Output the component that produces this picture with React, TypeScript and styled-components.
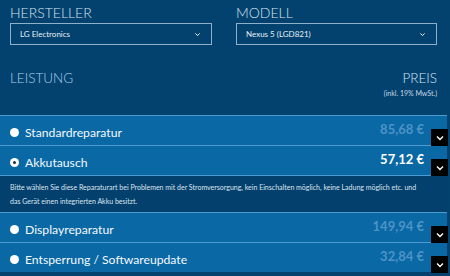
import React from "react";
import styled, { createGlobalStyle } from "styled-components";

const GlobalStyle = createGlobalStyle`
  body {
    margin: 0;
    background: #03426f;
    font-family: Lato, "Open Sans", sans-serif;
    overflow: hidden;
  }
`;

const Page = styled.div`
  width: 450px;
  height: 276px;
  overflow: hidden;
`;

const Pickers = styled.div`
  display: grid;
  grid-template-columns: 202px 201px;
  column-gap: 24px;
  padding: 3px 13px 0 10px;
`;

const Field = styled.div`
  display: flex;
  flex-direction: column;
`;

const Label = styled.div`
  color: #d3e3ef;
  font-size: 14px;
  font-weight: 300;
  line-height: 20px;
`;

const Select = styled.div`
  height: 20px;
  border: 1px solid #8fb0c8;
  display: flex;
  align-items: center;
  justify-content: space-between;
  padding: 0 10px 0 9px;
  color: #e6eef5;
  font-size: 8px;
`;

const Header = styled.div`
  display: flex;
  justify-content: space-between;
  padding: 25px 13px 0 10px;
  height: 70px;
  box-sizing: border-box;
`;

const HeadLabel = styled.div`
  color: #a9cfe9;
  font-size: 13.5px;
  font-weight: 300;
  line-height: 16px;
`;

const PriceHead = styled.div`
  display: flex;
  flex-direction: column;
  align-items: flex-end;
`;

const PriceLabel = styled(HeadLabel)`
  color: #d3e3ef;
`;

const Vat = styled.div`
  color: #c6d7e4;
  font-size: 7px;
  margin-top: 3px;
`;

const List = styled.div`
  margin-right: 3px;
`;

const Row = styled.div`
  position: relative;
  height: 29px;
  background: #0a69a5;
  border-top: 1px solid #4d9bd0;
  display: flex;
  align-items: center;
  justify-content: space-between;
  padding: 0 23px 0 10px;
`;

const Name = styled.div`
  display: flex;
  align-items: center;
  gap: 6px;
  color: #f4f8fb;
  font-size: 12.2px;
  padding-top: 3px;
`;

const Radio = styled.span<{ $checked?: boolean }>`
  width: 9px;
  height: 9px;
  border-radius: 50%;
  background: #ffffff;
  display: flex;
  align-items: center;
  justify-content: center;
  &::after {
    content: "";
    width: 3px;
    height: 3px;
    border-radius: 50%;
    background: ${(p) => (p.$checked ? "#1b2f40" : "transparent")};
  }
`;

const Price = styled.div<{ $active?: boolean }>`
  color: ${(p) => (p.$active ? "#ffffff" : "#4d93c6")};
  font-size: 13px;
  font-weight: 700;
  padding-bottom: 4px;
`;

const Toggle = styled.div`
  position: absolute;
  right: -1px;
  bottom: -1px;
  width: 17px;
  height: 17px;
  background: #000;
  display: flex;
  align-items: center;
  justify-content: center;
  z-index: 1;
`;

const Info = styled.div`
  background: #03406d;
  border-top: 1px solid #4d9bd0;
  padding: 4px 10px 4px 10px;
  color: #dbe6ef;
  font-size: 7px;
  line-height: 14px;
`;

const Chevron = ({ size = 8 }: { size?: number }) => (
  <svg width={size} height={size} viewBox="0 0 10 10">
    <path d="M2 3.5 L5 6.5 L8 3.5" fill="none" stroke="#fff" strokeWidth="1.4" />
  </svg>
);

const services = [
  { name: "Standardreparatur", price: "85,68 €" },
  { name: "Akkutausch", price: "57,12 €", checked: true },
  { name: "Displayreparatur", price: "149,94 €" },
  { name: "Entsperrung / Softwareupdate", price: "32,84 €" },
];

export default function App() {
  return (
    <Page>
      <GlobalStyle />
      <Pickers>
        <Field>
          <Label>HERSTELLER</Label>
          <Select>
            LG Electronics
            <Chevron size={7} />
          </Select>
        </Field>
        <Field>
          <Label>MODELL</Label>
          <Select>
            Nexus 5 (LGD821)
            <Chevron size={7} />
          </Select>
        </Field>
      </Pickers>
      <Header>
        <HeadLabel>LEISTUNG</HeadLabel>
        <PriceHead>
          <PriceLabel>PREIS</PriceLabel>
          <Vat>(inkl. 19% MwSt.)</Vat>
        </PriceHead>
      </Header>
      <List>
        {services.map((s) => (
          <React.Fragment key={s.name}>
            <Row>
              <Name>
                <Radio $checked={s.checked} />
                {s.name}
              </Name>
              <Price $active={s.checked}>{s.price}</Price>
              <Toggle>
                <Chevron size={10} />
              </Toggle>
            </Row>
            {s.checked && (
              <Info>
                Bitte wählen Sie diese Reparaturart bei Problemen mit der Stromversorgung, kein Einschalten möglich, keine Ladung möglich etc. und
                <br />
                das Gerät einen integrierten Akku besitzt.
              </Info>
            )}
          </React.Fragment>
        ))}
      </List>
    </Page>
  );
}
